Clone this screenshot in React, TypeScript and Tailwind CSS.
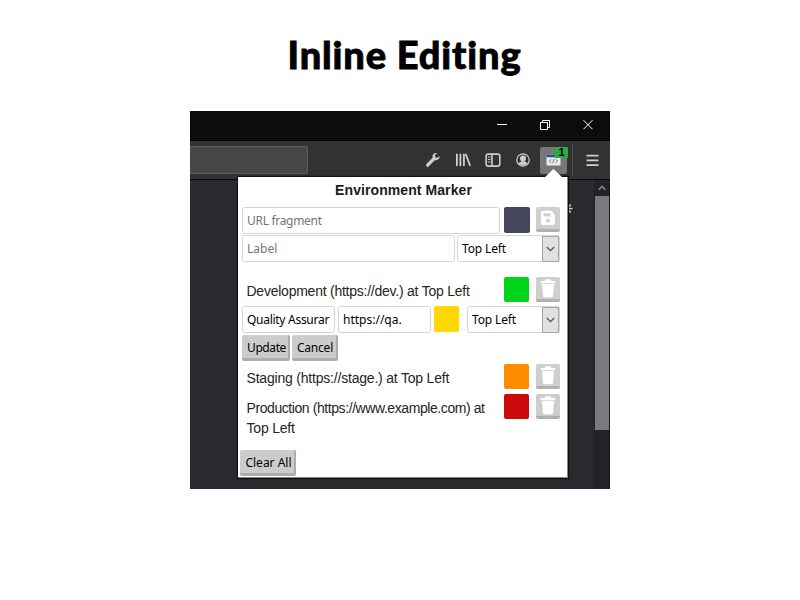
import React from "react";

const ui = "font-['Noto_Sans',sans-serif] text-[12px] text-black";
const field = "h-[27px] rounded-[3px] border border-[#d5d5d8] bg-white pl-[4px] flex items-center whitespace-nowrap";
const button = "flex h-[26px] items-center justify-center rounded-[2px] border-r-[2px] border-b-[3px] border-[#adadad] bg-[#cccccc] whitespace-nowrap pt-[3px]";

function Select({ className }: { className: string }) {
  return (
    <div className={`${field} ${ui} ${className} justify-between`}>
      <span className="tracking-[-0.15px]">Top Left</span>
      <span className="flex h-[26px] w-[17px] shrink-0 items-center justify-center border border-[#a6a6a6] bg-[#e1e1e1]">
        <svg width="9" height="6" viewBox="0 0 9 6" fill="none" stroke="#505050" strokeWidth="1.2"><path d="M.8 1l3.7 3.7L8.2 1" /></svg>
      </span>
    </div>
  );
}

function IconButton({ kind }: { kind: "save" | "trash" }) {
  return (
    <div className="ml-[7px] flex h-[25px] w-[24px] justify-center rounded-[2px] border-b-[3px] border-[#b2b2b2] bg-[#cecece]">
      {kind === "save" ? (
        <svg className="mt-[3px]" width="16" height="16" viewBox="0 0 16 17">
          <path d="M2 .8h9.3L15.3 5v9.2a1.8 1.8 0 0 1-1.8 1.8H2.3a1.8 1.8 0 0 1-1.8-1.8V2.4A1.6 1.6 0 0 1 2 .8z" fill="#fff" />
          <path d="M3.2 3.6h7.5v3.2H3.2z" fill="#cecece" />
          <circle cx="8" cy="11.4" r="2.1" fill="#cecece" />
        </svg>
      ) : (
        <svg className="mt-px" width="16" height="20" viewBox="0 0 16 20" fill="#fff">
          <path d="M.7 3h4L5.3 1.2h5.2L11 3h4.3v2.2H.7zM2 5.9h12l-1 12.1a1.3 1.3 0 0 1-1.3 1.2H4.3A1.3 1.3 0 0 1 3 18z" />
        </svg>
      )}
    </div>
  );
}

function Marker({ text, color, top, tracking, second }: { text: string; color: string; top: string; tracking: string; second?: string }) {
  return (
    <div className={`flex items-start ${top}`}>
      <div className={`w-[262px] pl-[4.5px] pt-[4px] text-[14px] leading-[20px] whitespace-nowrap text-[#252525] ${tracking}`}>
        {text}{second && <span className="block tracking-[-0.2px]">{second}</span>}
      </div>
      <div className={`h-[25px] w-[25px] rounded-[2px] ${color}`} />
      <IconButton kind="trash" />
    </div>
  );
}

export default function App() {
  return (
    <div className="flex h-[600px] w-[800px] flex-col items-center overflow-hidden bg-white font-['Liberation_Sans',Arial,sans-serif]">
      <h1 className="flex h-[111px] items-center pb-[3px] pl-[9px] font-['Lato',sans-serif] text-[38px] leading-none font-black tracking-[.85px] whitespace-nowrap text-black [-webkit-text-stroke:0.8px_black]">Inline Editing</h1>
      <main className="relative flex h-[378px] w-[420px] flex-col overflow-hidden bg-[#2a292e]">
        <div className="flex h-[30px] shrink-0 items-center justify-end border-b border-black bg-[#0c0c0d] pr-[16px] pb-[2px]">
          <svg width="100" height="13" viewBox="0 0 100 13" fill="none" stroke="#fff" strokeWidth="1">
            <path d="M3 6.5h10M46.5 4.5h7v7h-7zM48.5 4.5v-2h7v7h-2M89.5 2.2l9 9M98.5 2.2l-9 9" />
          </svg>
        </div>
        <div className="flex h-[39px] shrink-0 items-center border-b border-[#08080a] bg-[#323234]">
          <div className="h-[28px] w-[118px] rounded-r-[2px] border border-l-0 border-[#5c5c5e] bg-[#474749]" />
          <div className="ml-[117px] flex items-center text-[#cfcfd0]">
            <svg width="16" height="16" viewBox="0 0 16 16" fill="currentColor"><path d="M14.5 4.1l-2.6 1.8-1.8-1.2.2-2.1 2-1.4C10 .5 8.1 1.6 7.6 3.6c-.2.8-.1 1.4.1 2L1.5 12a1.6 1.6 0 0 0 2.3 2.3L10 8.1c2.7.8 5-1.4 4.5-4z" /></svg>
            <svg className="ml-[14px]" width="16" height="16" viewBox="0 0 16 16" fill="none" stroke="currentColor" strokeWidth="1.8" strokeLinecap="round"><path d="M1.9 2.5v10.8M5.4 2.5v10.8M8.9 2.5v10.8M11 2.7l3.9 10.5" /></svg>
            <svg className="ml-[14px]" width="16" height="16" viewBox="0 0 16 16" fill="none" stroke="currentColor" strokeWidth="1.6"><rect x="1.2" y="2.1" width="13.6" height="12" rx="2" /><path d="M7 2v12" /><path d="M3 5h2.5M3 7.5h2.5M3 10h2.5" strokeWidth="1" /></svg>
            <svg className="ml-[14px]" width="16" height="16" viewBox="0 0 16 16"><circle cx="8" cy="8" r="6.2" fill="none" stroke="currentColor" strokeWidth="1.2" /><circle cx="8" cy="6.5" r="3" fill="currentColor" /><path d="M3.5 11.2c1.2-1.4 2.1-1.2 2.8-2h3.4c.7.8 1.8.6 2.8 2-1 1.4-2.7 2.2-4.5 2.2s-3.5-.8-4.5-2.2z" fill="currentColor" /></svg>
            <div className="relative ml-[9px] h-[27px] w-[27px] rounded-[2px] bg-[#77777a]">
              <svg className="absolute top-[7px] left-[6px]" width="15" height="12" viewBox="0 0 15 12"><rect x=".5" y=".5" width="14" height="11" rx="1" fill="#ececef" /><path d="M.5.5h14v2.8H.5z" fill="#245786" /><path d="M5.3 5.2L3.4 7l1.9 1.8M9.7 5.2L11.6 7 9.7 8.8M8.2 4.8L6.8 9.2" fill="none" stroke="#77777a" strokeWidth="1" /></svg>
              <span className="absolute top-0 left-[15px] flex h-[11px] w-[13px] items-center justify-center rounded-[1px] bg-[#2aa945] text-[11px] leading-none font-bold text-black">1</span>
            </div>
            <div className="ml-[5px] h-[31px] w-px bg-[#505052]" />
            <svg className="ml-[13px]" width="13" height="13" viewBox="0 0 13 13" stroke="currentColor" strokeWidth="1.8"><path d="M.5 1.7h12M.5 6.4h12M.5 11.1h12" /></svg>
          </div>
        </div>
        <div className="flex grow justify-end">
          <svg className="mt-[22px] mr-[21px]" width="12" height="13" viewBox="0 0 12 13" stroke="#d8d8da" strokeWidth="1.7"><path d="M6 .5v12M.5 6.5h11M2.3 2.5l7.4 8M9.7 2.5l-7.4 8" /></svg>
          <div className="flex w-[16px] flex-col border-r border-[#18181b] bg-[#232327] pl-px">
            <div className="flex h-[16px] items-center justify-center"><svg width="8" height="6" viewBox="0 0 8 6" fill="none" stroke="#85858a" strokeWidth="1.5"><path d="M.7 4.8L4 1.4l3.3 3.4" /></svg></div>
            <div className="h-[234px] bg-[#7a7a7c]" />
          </div>
        </div>

        <section className="absolute top-[66px] left-[48px] h-[301px] w-[330px] border-r border-b border-[#868686] bg-white shadow-[0_0_1px_1px_#101012]">
          <svg className="absolute top-[-8px] left-[306px]" width="19" height="9" viewBox="0 0 19 9"><path d="M0 9L9.5 0 19 9z" fill="#fff" /></svg>
          <h2 className="h-[30px] pt-[4px] pl-[2px] text-center text-[14px] leading-[18px] font-bold tracking-[.08px] text-[#1b1b1b]">Environment Marker</h2>
          <div className="flex pl-[4px]">
            <div className={`${field} ${ui} w-[258px]`}><span className="tracking-[-0.3px] text-[#757575]">URL fragment</span></div>
            <div className="ml-[4px] h-[26px] w-[26px] rounded-[2px] bg-[#45455b]" />
            <div className="-ml-px"><IconButton kind="save" /></div>
          </div>
          <div className="mt-px flex pl-[4px]">
            <div className={`${field} ${ui} w-[213px]`}><span className="text-[#757575]">Label</span></div>
            <Select className="ml-[2px] w-[103px]" />
          </div>
          <div className="pl-[4px]">
            <Marker text="Development (https://dev.) at Top Left" color="bg-[#00d51b]" top="mt-[15px]" tracking="tracking-[-0.24px]" />
            <div className="mt-[4px] flex">
              <div className={`${field} ${ui} w-[93px] tracking-[-0.28px]`}>Quality Assurar</div>
              <div className={`${field} ${ui} ml-[3px] w-[93px]`}>https://qa.</div>
              <div className="ml-[3px] h-[26px] w-[25px] rounded-[2px] bg-[#ffd800]" />
              <Select className="ml-[8px] w-[93px]" />
            </div>
            <div className="mt-[2px] flex gap-[2px]">
              <div className={`${button} ${ui} w-[48px] pl-[3px] tracking-[-0.4px]`}>Update</div>
              <div className={`${button} ${ui} w-[46px] pl-[2px] tracking-[-0.2px]`}>Cancel</div>
            </div>
            <Marker text="Staging (https://stage.) at Top Left" color="bg-[#ff8b00]" top="mt-[3px]" tracking="tracking-[-0.2px]" />
            <Marker text="Production (https://www.example.com) at" second="Top Left" color="bg-[#cc090d]" top="mt-[5px]" tracking="tracking-[-0.42px]" />
          </div>
          <div className={`${button} ${ui} mt-[12px] ml-[2px] w-[56px] pl-[3px]`}>Clear All</div>
        </section>
      </main>
    </div>
  );
}
